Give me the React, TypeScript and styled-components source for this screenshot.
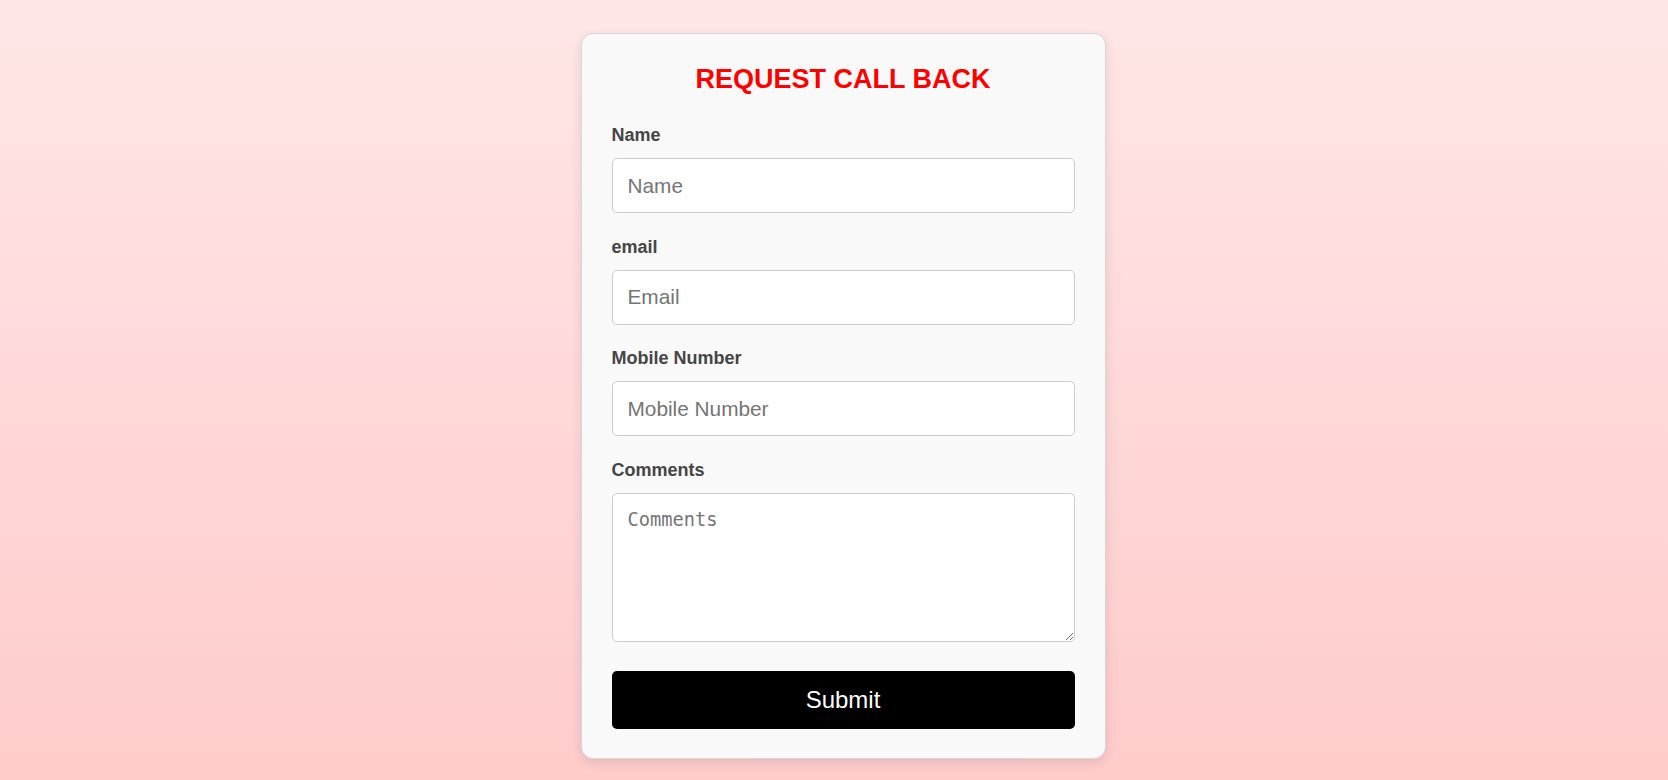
import styled, { createGlobalStyle } from 'styled-components';

const GlobalStyle = createGlobalStyle`
  html,
  body {
    margin: 0;
    padding: 0;
  }

  body {
    font-family: 'Liberation Sans', Arial, sans-serif;
    background: linear-gradient(to bottom, #ffe6e6, #ffcbcb);
    min-height: 100vh;
  }
`;

const fields = [
  { id: 'name', label: 'Name', placeholder: 'Name', type: 'text' },
  { id: 'email', label: 'email', placeholder: 'Email', type: 'email' },
  { id: 'mobile', label: 'Mobile Number', placeholder: 'Mobile Number', type: 'tel' },
];

const App = () => {
  return (
    <>
      <GlobalStyle />
      <PageLayout>
        <FormCard onSubmit={(e) => e.preventDefault()}>
          <FormTitle>REQUEST CALL BACK</FormTitle>

          <FieldList>
            {fields.map((field) => (
              <Field key={field.id}>
                <FieldLabel htmlFor={field.id}>{field.label}</FieldLabel>
                <TextInput id={field.id} type={field.type} placeholder={field.placeholder} />
              </Field>
            ))}

            <Field>
              <FieldLabel htmlFor="comments">Comments</FieldLabel>
              <CommentsInput id="comments" placeholder="Comments" />
            </Field>
          </FieldList>

          <SubmitButton type="submit">Submit</SubmitButton>
        </FormCard>
      </PageLayout>
    </>
  );
};

export default App;

const PageLayout = styled.div`
  display: flex;
  justify-content: center;
  align-items: flex-start;
  min-height: 100vh;
  box-sizing: border-box;
  padding: 33px 0 0 18px;
`;

const FormCard = styled.form`
  display: flex;
  flex-direction: column;
  width: 525px;
  box-sizing: border-box;
  padding: 30px 30px 29px;
  background-color: #f9f9f9;
  border: 1px solid #d6d6d6;
  border-radius: 12px;
  box-shadow: 0 4px 12px rgba(0, 0, 0, 0.1);
`;

const FormTitle = styled.h2`
  margin: 0 0 30px;
  text-align: center;
  font-size: 27px;
  font-weight: 700;
  color: #ff0000;
`;

const FieldList = styled.div`
  display: flex;
  flex-direction: column;
  gap: 23.5px;
`;

const Field = styled.div`
  display: flex;
  flex-direction: column;
`;

const FieldLabel = styled.label`
  margin-bottom: 12px;
  font-size: 18px;
  font-weight: 700;
  color: #454545;
`;

const TextInput = styled.input`
  box-sizing: border-box;
  width: 100%;
  height: 55px;
  padding: 0 15px;
  font-family: 'Liberation Sans', Arial, sans-serif;
  font-size: 20.8px;
  color: #333;
  background-color: #fff;
  border: 1px solid #cccccc;
  border-radius: 5px;
  outline: none;

  &::placeholder {
    color: #757575;
  }
`;

const CommentsInput = styled.textarea`
  box-sizing: border-box;
  width: 100%;
  height: 149px;
  padding: 15px;
  font-family: 'DejaVu Sans Mono', 'Liberation Mono', monospace;
  font-size: 18.7px;
  color: #333;
  background-color: #fff;
  border: 1px solid #cccccc;
  border-radius: 5px;
  outline: none;

  &::placeholder {
    color: #757575;
  }
`;

const SubmitButton = styled.button`
  margin-top: 29px;
  height: 58px;
  width: 100%;
  font-family: 'Liberation Sans', Arial, sans-serif;
  font-size: 24px;
  color: #fff;
  background-color: #000;
  border: none;
  border-radius: 5px;
  cursor: pointer;
`;
